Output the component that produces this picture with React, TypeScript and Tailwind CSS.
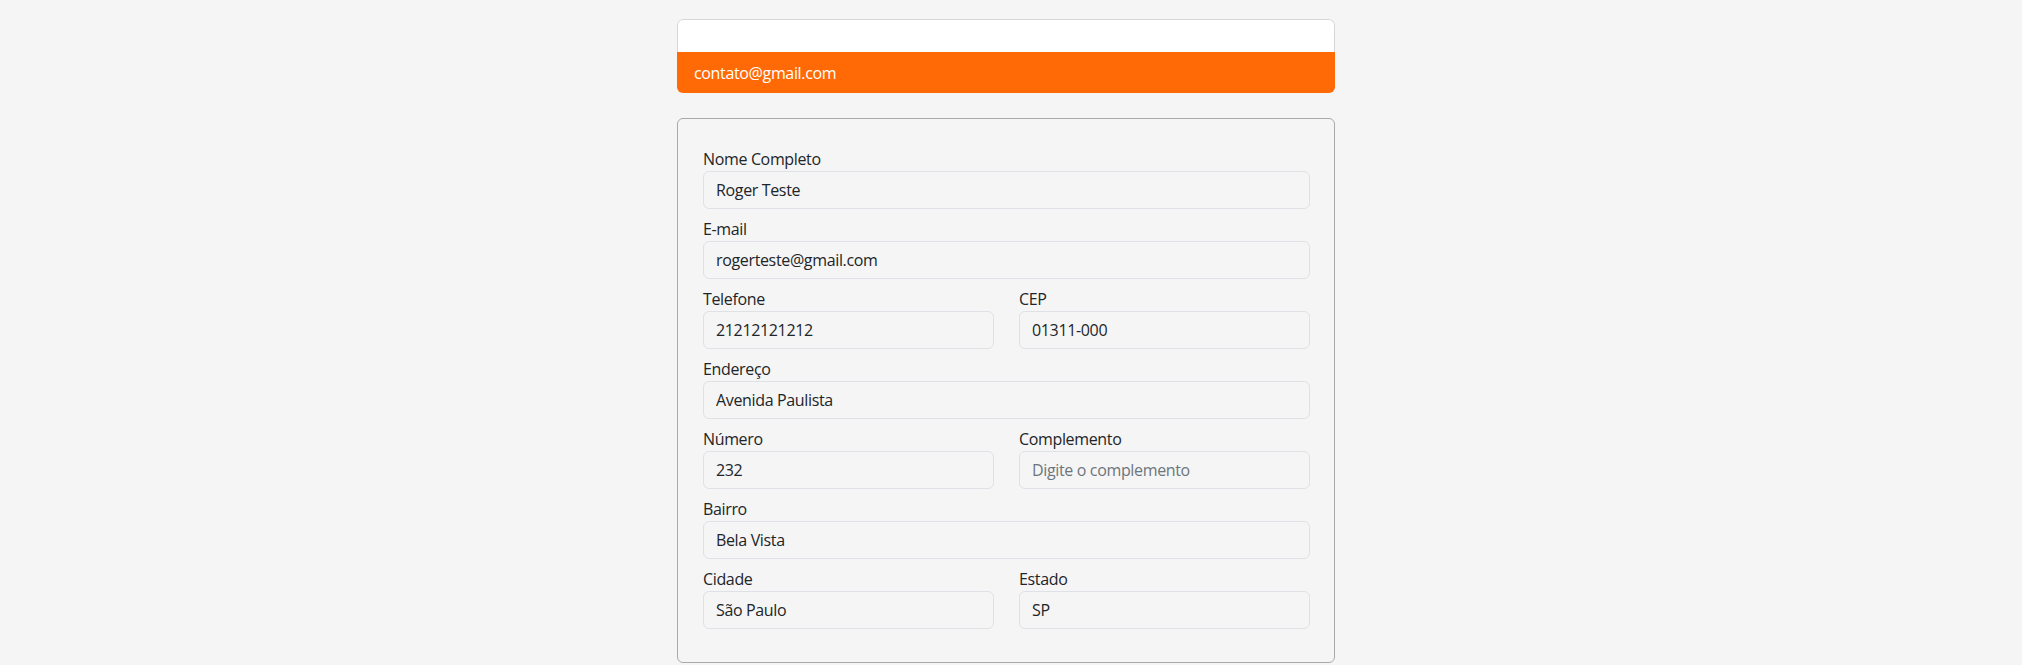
const fields: { label: string; value?: string; placeholder?: string }[][] = [
  [{ label: "Nome Completo", value: "Roger Teste" }],
  [{ label: "E-mail", value: "rogerteste@gmail.com" }],
  [
    { label: "Telefone", value: "21212121212" },
    { label: "CEP", value: "01311-000" },
  ],
  [{ label: "Endereço", value: "Avenida Paulista" }],
  [
    { label: "Número", value: "232" },
    { label: "Complemento", placeholder: "Digite o complemento" },
  ],
  [{ label: "Bairro", value: "Bela Vista" }],
  [
    { label: "Cidade", value: "São Paulo" },
    { label: "Estado", value: "SP" },
  ],
];

function Field({ label, value, placeholder }: { label: string; value?: string; placeholder?: string }) {
  return (
    <div className="mb-2 flex min-w-0 flex-1 flex-col">
      <label className="h-6 text-base leading-6 tracking-[-0.35px] text-[#212529]">{label}</label>
      <input
        readOnly
        value={value ?? ""}
        placeholder={placeholder}
        className="h-[38px] w-full rounded-md border border-[#dee2e6] bg-[#f5f5f5] px-3 text-base leading-6 tracking-[-0.35px] text-[#212529] outline-none placeholder:text-[#6c757d]"
      />
    </div>
  );
}

export default function App() {
  return (
    <div className="min-h-[665px] bg-[#f5f5f5] pr-[10px] font-['Open_Sans','Noto_Sans',sans-serif]">
      <div className="mx-auto w-[658px] pt-[19px]">
        <div className="overflow-hidden rounded-md">
          <div className="h-[33px] rounded-t-md border-x border-t border-[#d6d6d6] bg-white" />
          <div className="flex h-[41px] items-center bg-[#ff6a06] px-[17px] text-base tracking-[-0.35px] text-white">
            contato@gmail.com
          </div>
        </div>

        <div className="mt-[25px] rounded-md border border-[#a9a9a9] pb-[25px] pl-[25px] pr-6 pt-7">
          {fields.map((row, i) => (
            <div key={i} className="flex gap-[25px]">
              {row.map((f) => (
                <Field key={f.label} {...f} />
              ))}
            </div>
          ))}
        </div>
      </div>
    </div>
  );
}
